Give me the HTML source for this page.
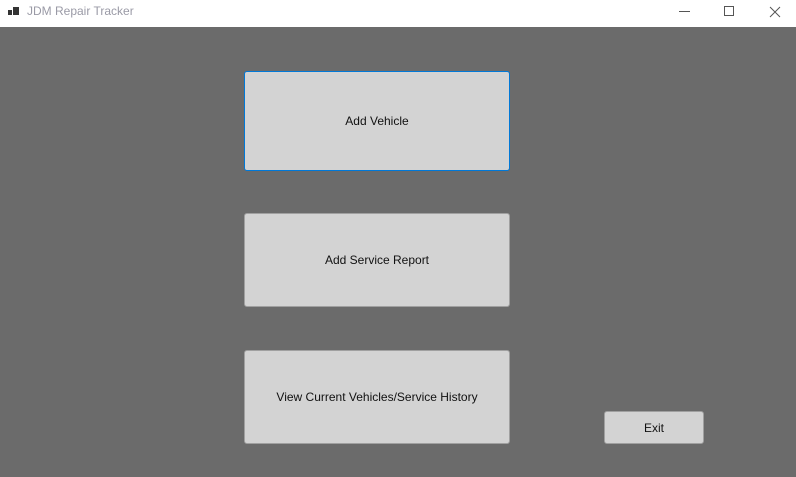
<!DOCTYPE html>
<html><head><style>
body{margin:0;width:796px;height:477px;overflow:hidden;background:#6b6b6b;font-family:"Segoe UI","Liberation Sans",sans-serif;position:relative}
.tb{position:absolute;left:0;top:0;width:796px;height:27px;background:#fff}
.t{position:absolute;left:27px;top:4px;font-size:12px;color:#9a9aa6}
.b{position:absolute;background:#d3d3d3;border:1px solid #a0a0a0;border-radius:3px;box-sizing:border-box;display:flex;align-items:center;justify-content:center;font-size:12px;color:#111}
</style></head><body>
<div class="tb">
<svg style="position:absolute;left:7px;top:5px" width="14" height="14"><rect x="1" y="5" width="4" height="5" fill="#333"/><rect x="6" y="2" width="6" height="8" fill="#333"/></svg>
<div class="t">JDM Repair Tracker</div>
<svg style="position:absolute;left:660px;top:0" width="136" height="27"><line x1="19" y1="11.5" x2="30" y2="11.5" stroke="#555"/><rect x="64.5" y="6.5" width="9" height="9" fill="none" stroke="#555"/><path d="M110 7L120 17M120 7L110 17" stroke="#555"/></svg>
</div>
<div class="b" style="left:244px;top:71px;width:266px;height:100px;border:1px solid #0078d7">Add Vehicle</div>
<div class="b" style="left:244px;top:213px;width:266px;height:94px">Add Service Report</div>
<div class="b" style="left:244px;top:350px;width:266px;height:94px">View Current Vehicles/Service History</div>
<div class="b" style="left:604px;top:411px;width:100px;height:33px">Exit</div>
</body></html>
